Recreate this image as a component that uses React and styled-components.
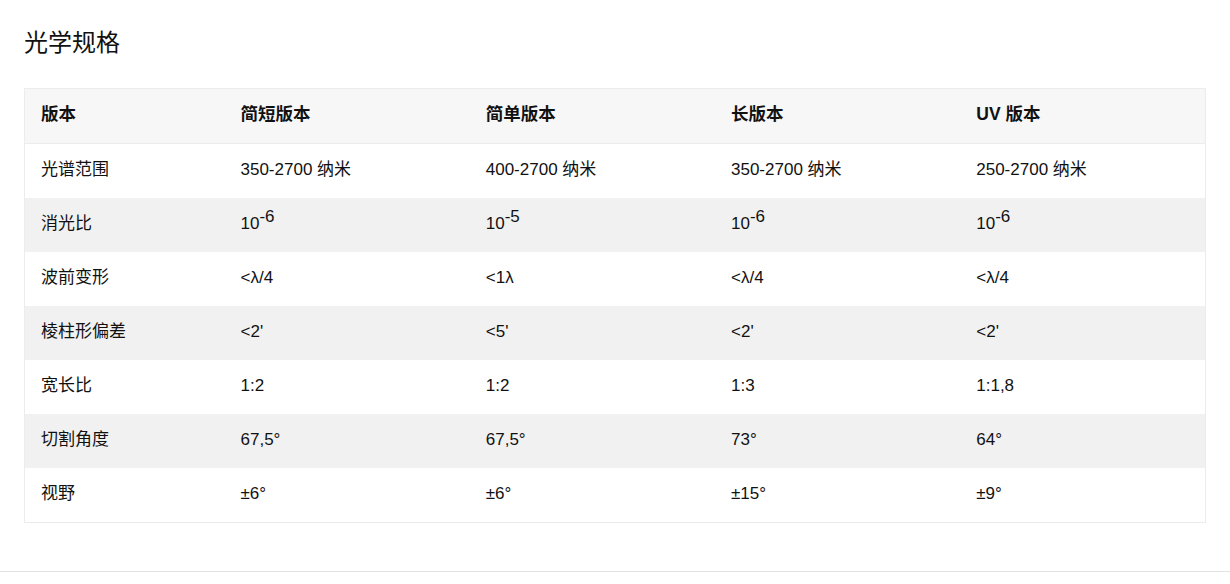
import React from "react";
import styled, { createGlobalStyle } from "styled-components";

const GlobalStyle = createGlobalStyle`
  html, body {
    margin: 0;
    padding: 0;
    background: #fff;
    font-family: "Liberation Sans", Arial, "Noto Sans CJK SC", sans-serif;
    color: #111;
  }
`;

const columns = ["版本", "简短版本", "简单版本", "长版本", "UV 版本"];

const rows = [
  ["光谱范围", "350-2700 纳米", "400-2700 纳米", "350-2700 纳米", "250-2700 纳米"],
  ["消光比", { exp: "-6" }, { exp: "-5" }, { exp: "-6" }, { exp: "-6" }],
  ["波前变形", "<λ/4", "<1λ", "<λ/4", "<λ/4"],
  ["棱柱形偏差", "<2'", "<5'", "<2'", "<2'"],
  ["宽长比", "1:2", "1:2", "1:3", "1:1,8"],
  ["切割角度", "67,5°", "67,5°", "73°", "64°"],
  ["视野", "±6°", "±6°", "±15°", "±9°"],
];

function Cell({ value }) {
  if (typeof value === "object") {
    return (
      <>
        10<Sup>{value.exp}</Sup>
      </>
    );
  }
  return value;
}

function App() {
  return (
    <>
      <GlobalStyle />
      <Section>
        <Title>光学规格</Title>
        <Table>
          <colgroup>
            <col style={{ width: 200 }} />
            <col />
            <col />
            <col />
            <col />
          </colgroup>
          <thead>
            <tr>
              {columns.map((c) => (
                <Th key={c}>{c}</Th>
              ))}
            </tr>
          </thead>
          <tbody>
            {rows.map((r, i) => (
              <Row key={r[0]} $striped={i % 2 === 1}>
                {r.map((v, j) => (
                  <Td key={j}>
                    <Cell value={v} />
                  </Td>
                ))}
              </Row>
            ))}
          </tbody>
        </Table>
      </Section>
    </>
  );
}

const Section = styled.section`
  padding: 28px 24px 48px;
  border-bottom: 1px solid #e2e2e2;
`;

const Title = styled.h2`
  margin: 0 0 31px;
  font-size: 24px;
  font-weight: 400;
  line-height: 29px;
  color: #111;
`;

const Table = styled.table`
  width: 100%;
  border-collapse: collapse;
  table-layout: fixed;
  border: 1px solid #ececec;
`;

const Th = styled.th`
  text-align: left;
  font-size: 17.5px;
  font-weight: 700;
  line-height: 20px;
  padding: 15px 16px 19px;
  background: #f7f7f7;
  border-bottom: 1px solid #ececec;
  color: #111;
`;

const Row = styled.tr`
  background: ${(p) => (p.$striped ? "#f1f1f1" : "#fff")};
`;

const Td = styled.td`
  font-size: 17px;
  line-height: 20px;
  padding: 16px 16px 18px;
  vertical-align: middle;
  color: #111;
`;

const Sup = styled.sup`
  font-size: 17px;
  line-height: 0;
  position: relative;
  vertical-align: baseline;
  top: -0.4em;
`;

export default App;
